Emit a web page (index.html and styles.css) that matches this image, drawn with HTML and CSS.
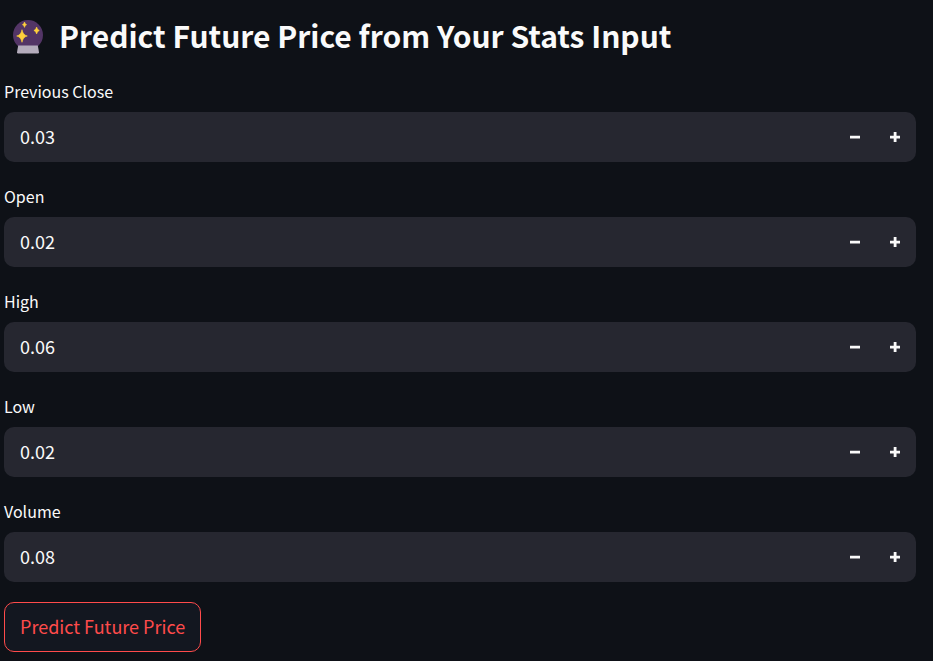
FILE: index.html
```html
<!DOCTYPE html>
<html lang="en">
<head>
<meta charset="utf-8">
<meta name="viewport" content="width=device-width, initial-scale=1">
<title>Predict Future Price</title>
<link rel="stylesheet" href="styles.css">
</head>
<body>
<svg class="sprite" aria-hidden="true">
  <symbol id="minus" viewBox="0 0 10 10"><path d="M0 3.7h10v2.8H0z"/></symbol>
  <symbol id="plus" viewBox="0 0 10 10"><path d="M3.7 0h2.8v3.7H10v2.8H6.5V10H3.7V6.5H0V3.7h3.7z"/></symbol>
</svg>
<main class="page">
  <h1 class="title">
    <svg class="ball" viewBox="0 0 30 34" aria-hidden="true">
      <circle cx="15" cy="15" r="15" fill="#533566"/>
      <path d="M5.2 25.5h19.6l1.2 6.7q0 1.300-1.200 1.300H5.200Q4 33.500 4 32.200z" fill="#b4acbc"/>
      <path d="M9 9.700q1 5.300 5.300 6.300-4.300 1-5.300 6.300-1-5.300-5.300-6.300 4.300-1 5.300-6.300zM23.600 7q.6 3 2.700 3.500-2.100.5-2.700 3.500-.6-3-2.700-3.500 2.100-.5 2.700-3.500zM11.500 2q.5 2.300 2.100 2.700-1.600.4-2.100 2.700-.5-2.300-2.100-2.700 1.600-.4 2.100-2.700z" fill="#ffd13b" stroke="#ffd13b" stroke-width=".6" stroke-linejoin="round"/>
    </svg>
    <span>Predict Future Price from Your Stats Input</span>
  </h1>
  <form class="form">
    <div class="field">
      <label class="label" for="close">Previous Close</label>
      <div class="box">
        <input class="value" id="close" type="text" inputmode="decimal" value="0.03">
        <button class="step" type="button" aria-label="Decrease Previous Close"><svg class="icon"><use href="#minus"/></svg></button>
        <button class="step" type="button" aria-label="Increase Previous Close"><svg class="icon"><use href="#plus"/></svg></button>
      </div>
    </div>
    <div class="field">
      <label class="label" for="open">Open</label>
      <div class="box">
        <input class="value" id="open" type="text" inputmode="decimal" value="0.02">
        <button class="step" type="button" aria-label="Decrease Open"><svg class="icon"><use href="#minus"/></svg></button>
        <button class="step" type="button" aria-label="Increase Open"><svg class="icon"><use href="#plus"/></svg></button>
      </div>
    </div>
    <div class="field">
      <label class="label" for="high">High</label>
      <div class="box">
        <input class="value" id="high" type="text" inputmode="decimal" value="0.06">
        <button class="step" type="button" aria-label="Decrease High"><svg class="icon"><use href="#minus"/></svg></button>
        <button class="step" type="button" aria-label="Increase High"><svg class="icon"><use href="#plus"/></svg></button>
      </div>
    </div>
    <div class="field">
      <label class="label" for="low">Low</label>
      <div class="box">
        <input class="value" id="low" type="text" inputmode="decimal" value="0.02">
        <button class="step" type="button" aria-label="Decrease Low"><svg class="icon"><use href="#minus"/></svg></button>
        <button class="step" type="button" aria-label="Increase Low"><svg class="icon"><use href="#plus"/></svg></button>
      </div>
    </div>
    <div class="field">
      <label class="label" for="volume">Volume</label>
      <div class="box">
        <input class="value" id="volume" type="text" inputmode="decimal" value="0.08">
        <button class="step" type="button" aria-label="Decrease Volume"><svg class="icon"><use href="#minus"/></svg></button>
        <button class="step" type="button" aria-label="Increase Volume"><svg class="icon"><use href="#plus"/></svg></button>
      </div>
    </div>
    <button class="submit" type="submit">Predict Future Price</button>
  </form>
</main>
</body>
</html>
```
FILE: styles.css
```css
* {
  box-sizing: border-box;
}

body {
  margin: 0;
  background: #0e1117;
  color: #fafafa;
  font-family: "Source Sans Pro", "Noto Sans CJK SC", sans-serif;
}

.sprite {
  display: none;
}

.page {
  padding: 16px 17px 9px 4px;
}

.title {
  display: flex;
  align-items: center;
  gap: 16px;
  margin: 0 0 26px;
  padding-left: 9px;
  font-size: 30px;
  font-weight: 600;
  line-height: 38px;
}

.ball {
  flex: none;
  width: 30px;
  height: 34px;
  margin-top: 4px;
}

.form {
  display: flex;
  flex-direction: column;
  align-items: flex-start;
}

.field {
  width: 100%;
  margin-bottom: 23px;
}

.field:nth-last-child(2) {
  margin-bottom: 20px;
}

.label {
  display: block;
  margin-bottom: 10px;
  font-size: 16px;
  line-height: 22px;
}

.box {
  display: flex;
  height: 50px;
  padding-right: 1px;
  overflow: hidden;
  border-radius: 10px;
  background: #262730;
}

.value {
  flex: 1;
  min-width: 0;
  padding: 0 16px 2px;
  border: 0;
  outline: 0;
  background: transparent;
  color: inherit;
  font: inherit;
  font-size: 18px;
}

.step {
  display: flex;
  align-items: center;
  justify-content: center;
  width: 40px;
  padding: 0;
  border: 0;
  background: transparent;
  color: #fafafa;
  cursor: pointer;
}

.icon {
  width: 10px;
  height: 10px;
  fill: currentColor;
}

.submit {
  height: 50px;
  padding: 0 15px 2px;
  border: 1px solid #ff4b4b;
  border-radius: 10px;
  background: #131720;
  color: #ff4b4b;
  font: inherit;
  font-size: 18px;
  cursor: pointer;
}
```
